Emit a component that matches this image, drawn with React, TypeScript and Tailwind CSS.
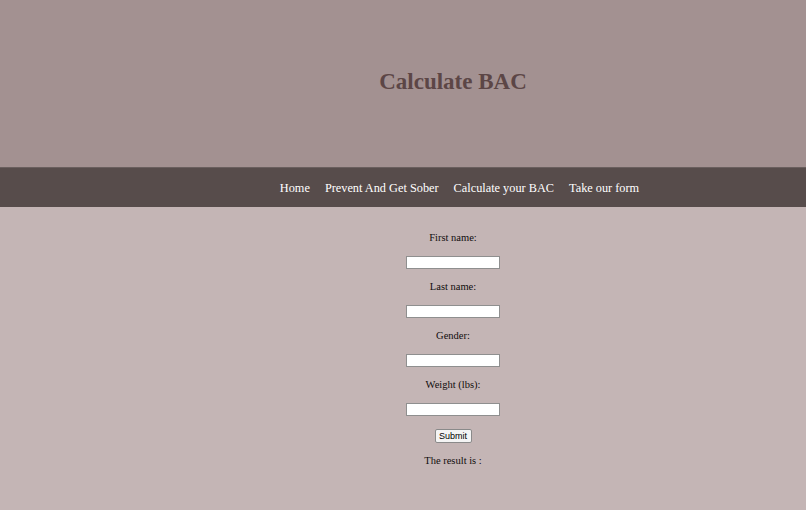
const fields = ['First name:', 'Last name:', 'Gender:', 'Weight (lbs):'];
const links = ['Home', 'Prevent And Get Sober', 'Calculate your BAC', 'Take our form'];

export default function App() {
  return (
    <div className="min-h-[510px] bg-[#c4b5b5] font-['Liberation_Serif',serif]">
      <header className="flex h-[167px] items-center justify-center bg-[#a39191] pb-[4px] pl-[100px]">
        <h1 className="text-[23px] font-bold leading-none text-[#5c4646]">Calculate BAC</h1>
      </header>

      <nav className="flex h-[40px] items-center justify-center gap-[15px] border-t border-[#6a5f5e] bg-[#574c4b] pl-[113px] pt-[1px] text-[12.3px] text-white">
        {links.map((l) => (
          <a key={l} href="#" className="leading-none">
            {l}
          </a>
        ))}
      </nav>

      <form className="flex flex-col items-center pl-[100px] pt-[25px] text-[10.5px] text-[#110d0d]">
        {fields.map((f, i) => (
          <div key={f} className={`flex flex-col items-center ${i > 0 ? 'mt-[12px]' : ''}`}>
            <label className="h-[12px] leading-[12px]">{f}</label>
            <input
              type="text"
              className="mt-[12px] h-[13px] w-[94px] border border-[#8f8f8f] bg-white"
            />
          </div>
        ))}
        <button
          type="button"
          className="mt-[13px] h-[14px] w-[37px] rounded-[2px] border border-[#8a8a8a] bg-[#f4f4f4] font-['Liberation_Sans',sans-serif] text-[9px] leading-none text-black"
        >
          Submit
        </button>
        <p className="mt-[12px] h-[12px] leading-[12px]">The result is :</p>
      </form>
    </div>
  );
}
